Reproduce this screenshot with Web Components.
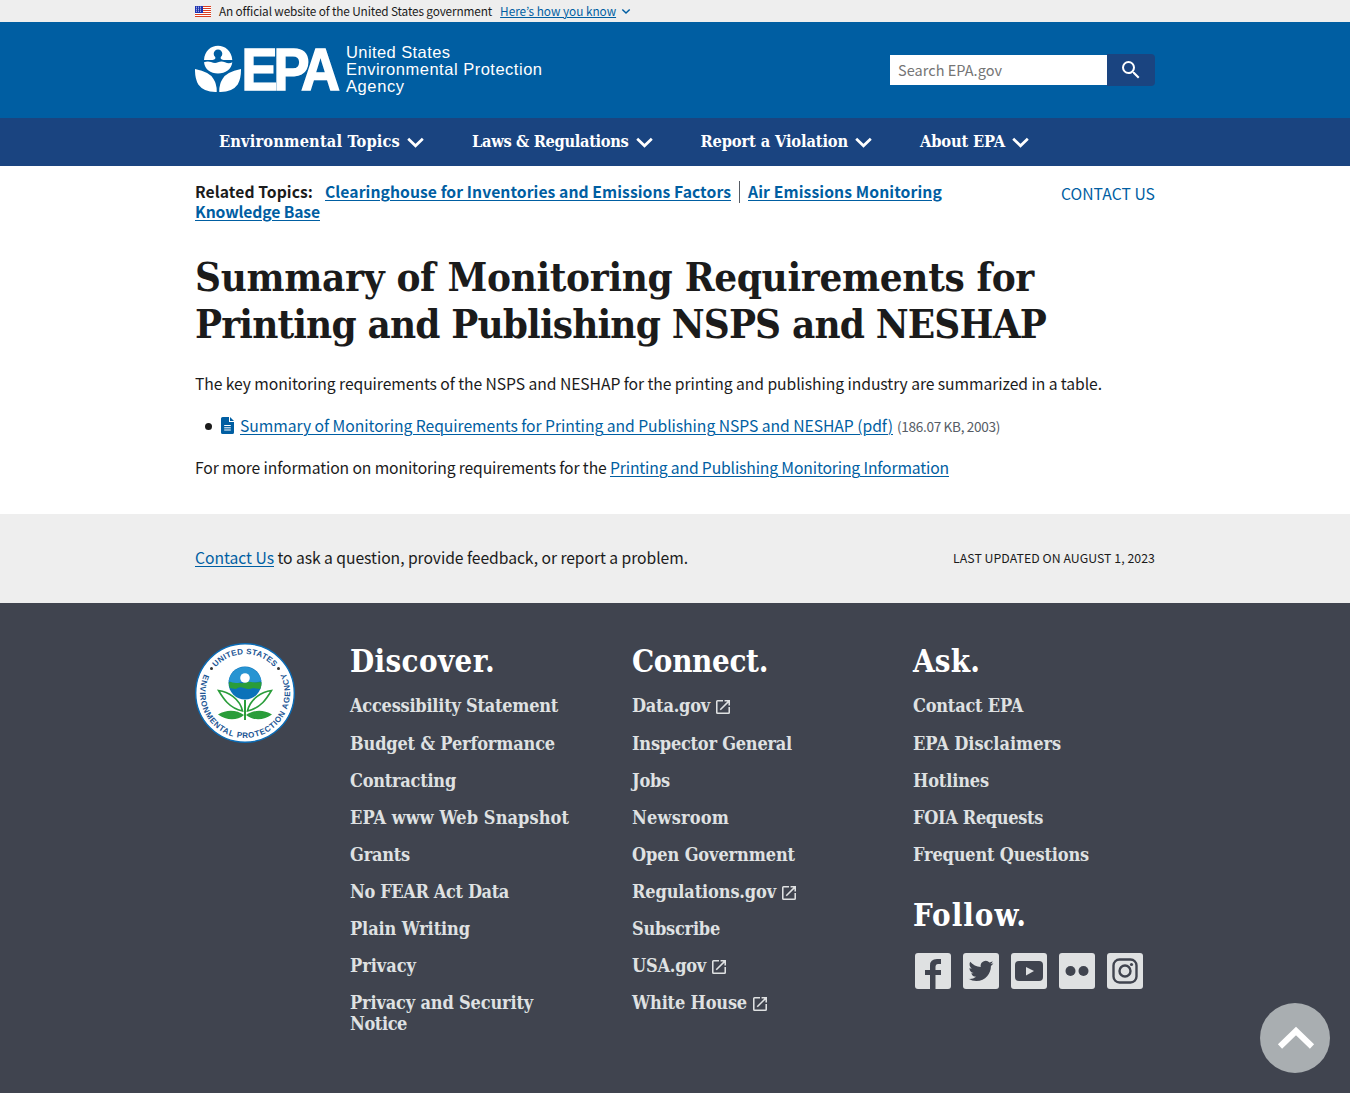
<!DOCTYPE html>
<html lang="en">
<head>
<meta charset="utf-8">
<title>Summary of Monitoring Requirements for Printing and Publishing NSPS and NESHAP | US EPA</title>
<style>
html{overflow:hidden}
body{margin:0;background:#fff;color:#1b1b1b;
--sans:"Noto Sans CJK KR","Open Sans",sans-serif;
--serif:"DejaVu Serif Condensed","DejaVu Serif",serif;
--link:#005ea2;--dark:#40444f;font-family:var(--sans);font-size:15.7px;line-height:26px}
</style>
</head>
<body>
<epa-page></epa-page>
<script>
const css = `*{box-sizing:border-box}a{color:var(--link);text-decoration-thickness:1px;text-underline-offset:2px}.wrap{width:960px;margin:0 auto}svg{display:block;flex:none}`;
function define(name, style, html){
  customElements.define(name, class extends HTMLElement{
    constructor(){
      super();
      this.attachShadow({mode:'open'}).innerHTML = '<style>' + css + style + '</style>' + (typeof html === 'function' ? html(this) : html);
    }
  });
}
const f = (text, w) => `<fit-text w="${w}">${text}</fit-text>`;

define('gov-banner', `:host{display:block;height:22px;background:#eee;font-size:11.8px;line-height:22px}
.wrap{display:flex;align-items:center;height:22px}.t{margin:0 8px}.c{margin-left:5px}a{text-underline-offset:1px}`,
`<div class="wrap"><svg width="16" height="11" viewBox="0 0 16 11"><path fill="#fff" d="M0 0h16v11H0z"/><path stroke="#db3e1f" d="M0 .5h16M0 2.5h16M0 4.5h16M0 6.5h16M0 8.5h16M0 10.5h16"/><path fill="#1e33b1" d="M0 0h8v7H0z"/><path stroke="#fff" stroke-width=".8" stroke-dasharray="1 1" d="M1 1.2h6M1 3.2h6M1 5.2h6"/></svg>
<span class="t">${f('An official website of the United States government',273)}</span><a href="#">${f('Here’s how you know',116)}</a>
<svg class="c" width="10" height="7" viewBox="0 0 10 7"><path fill="none" stroke="#005ea2" stroke-width="1.5" d="m1.3 1.5 3.7 3.5 3.7-3.5"/></svg></div>`);

define('epa-logo', `:host{display:block}text{font-family:"Liberation Sans",sans-serif;fill:#fff}`,
`<svg width="350" height="80" viewBox="0 -10 350 80">
<path fill="#fff" d="M9 19C9.500 10 16 4.800 23 4.800S36.700 10 37.300 19H28.500Q24.500 18 26 15.800A4.300 4.300 0 1 0 20 15.800Q21.600 18 17.500 19Z"/>
<path fill="#fff" d="M9 21.300Q12.500 19.700 16 21Q20 23 23 21.300Q26.500 19.700 30 21.300Q34 23 37.300 21.300C36.500 28.500 30.500 32.600 23 32.600S9.800 28.500 9 21.300Z"/>
<path fill="#fff" d="M0 28Q15 31 18.500 38Q22 43.500 21.700 51Q9 51.400 3.300 43.500Q-.2 37.500 0 28ZM46 28Q31 31 27.500 38Q24 43.500 24.300 51Q37 51.400 42.700 43.500Q46.200 37.500 46 28Z"/>
<text transform="translate(46.500 49) scale(.9 1)" x="0 35.500 66" font-size="60" font-weight="700" stroke="#fff" stroke-width="1.600">EPA</text>
<g font-size="16.500"><text x="151" y="17" textLength="104">United States</text><text x="151" y="33.500" textLength="196">Environmental Protection</text><text x="151" y="50.500" textLength="58">Agency</text></g></svg>`);

define('site-search', `:host{display:flex;width:265px;height:30px;margin-top:33px}
.i{width:217px;background:#fff;color:#757575;padding-left:8px;line-height:30px;font-size:14.5px}
button{width:48px;height:32px;margin-top:-1px;border:0;border-radius:0 4px 4px 0;background:#1a4480;padding:0;display:flex;align-items:center;justify-content:center}`,
`<div class="i">${f('Search EPA.gov',104)}</div><button aria-label="Search"><svg width="24" height="24" viewBox="0 0 24 24" fill="#fff"><path d="M15.500 14h-.79l-.28-.27A6.471 6.471 0 0 0 16 9.500 6.500 6.500 0 1 0 9.500 16c1.610 0 3.090-.59 4.230-1.570l.27.28v.79l5 4.990L20.490 19l-4.990-5zm-6 0C7.010 14 5 11.990 5 9.500S7.010 5 9.500 5 14 7.010 14 9.500 11.990 14 9.500 14z"/></svg></button>`);

define('site-header', `:host{display:block;background:#005ea2;height:96px}.wrap{display:flex;justify-content:space-between;padding-top:9px}site-search{margin-top:24px}`,
`<div class="wrap"><epa-logo></epa-logo><site-search></site-search></div>`);

define('nav-item', `:host{display:flex;align-items:center;gap:7px}`,
`<slot></slot><svg width="17" height="11" viewBox="0 0 17 11"><path fill="none" stroke="#fff" stroke-width="2.700" d="m1.200 1.800 7.300 7 7.300-7"/></svg>`);
define('site-nav', `:host{display:block;background:#1a4480;height:48px;color:#fff;font:bold 16.300px/46px var(--serif)}
.wrap{display:flex;padding-left:24px;height:48px;gap:48px}nav-item{height:48px}`,
`<div class="wrap"><nav-item>${f('Environmental Topics',181)}</nav-item><nav-item>${f('Laws &amp; Regulations',156.5)}</nav-item><nav-item>${f('Report a Violation',147.5)}</nav-item><nav-item>${f('About EPA',85)}</nav-item></div>`);

define('related-topics', `:host{display:flex;justify-content:space-between;height:70px;padding-top:15px}
.r{font-weight:700;line-height:20px;margin-top:1px}.l{display:flex;height:20px;align-items:center}.l i{width:1px;height:22px;background:#565c65;margin:0 8px}.l span{margin-right:12px}.c{line-height:26px}.c a{text-decoration:none}`,
`<div class="r"><div class="l"><span>${f('Related Topics:',118)}</span><a href="#">${f('Clearinghouse for Inventories and Emissions Factors',406)}</a><i></i><a href="#">${f('Air Emissions Monitoring',194)}</a></div><div class="l"><a href="#">${f('Knowledge Base',125)}</a></div></div><div class="c"><a href="#">${f('CONTACT US',94)}</a></div>`);

define('page-content', `:host{display:block;height:348px}h1{margin:17px 0 0;font:bold 40px/47px var(--serif)}
p{margin:0;line-height:26px}.a{margin-top:24px}.b{margin-top:16px}
ul{list-style:none;margin:16px 0 0;padding:0 0 0 10px}li{display:flex;align-items:center;height:26px}.dot{width:7px;height:7px;border-radius:50%;background:#1b1b1b;margin:0 9px 0 0}.s{font-size:13.600px;color:#565c65;margin:0 0 0 4px}.d{margin:0 6px 2px 0}`,
`<div class="wrap"><related-topics></related-topics><h1>${f('Summary of Monitoring Requirements for',839)}<br>${f('Printing and Publishing NSPS and NESHAP',851)}</h1>
<p class="a">${f('The key monitoring requirements of the NSPS and NESHAP for the printing and publishing industry are summarized in a table.',907)}</p>
<ul><li><span class="dot"></span><svg class="d" width="13" height="17" viewBox="0 0 13 17"><path fill="#005ea2" d="M1.600 0H8v5h5v10.400q0 1.600-1.600 1.600H1.600Q0 17 0 15.400V1.600Q0 0 1.600 0ZM9 0l4 4H9Z"/><path stroke="#fff" d="M3.200 8.500h6.600M3.200 10.800h6.600M3.200 13h6.600"/></svg><a href="#">${f('Summary of Monitoring Requirements for Printing and Publishing NSPS and NESHAP (pdf)',653)}</a><span class="s">${f('(186.07 KB, 2003)',103)}</span></li></ul>
<p class="b">${f('For more information on monitoring requirements for the&nbsp;',415)}<a href="#">${f('Printing and Publishing Monitoring Information',339)}</a></p></div>`);

define('contact-strip', `:host{display:block;background:#eee;height:89px}.wrap{display:flex;justify-content:space-between;align-items:center;height:87px}.u{font-size:12.300px;padding-top:1px}`,
`<div class="wrap"><div><a href="#">${f('Contact Us',79)}</a>${f('&nbsp;to ask a question, provide feedback, or report a problem.',414)}</div><div class="u">${f('LAST UPDATED ON AUGUST 1, 2023',202)}</div></div>`);

define('epa-seal', `:host{display:block;width:100px;height:100px}text{font-family:"Liberation Sans",sans-serif;font-weight:700;fill:#205493;font-size:8px}`,
`<svg width="100" height="100" viewBox="0 0 100 100"><circle cx="50" cy="50" r="49.300" fill="#fff" stroke="#0b6cb6" stroke-width="1.400"/>
<defs><path id="t" d="M11 50A39 39 0 0 1 89 50"/><path id="b" d="M10.500 28.500A45 45 0 1 0 89.500 28.500"/></defs>
<text><textPath href="#t" startOffset="28" textLength="66">UNITED STATES</textPath></text>
<text><textPath href="#b" startOffset="3" textLength="181">ENVIRONMENTAL PROTECTION AGENCY</textPath></text>
<circle cx="16.500" cy="25.500" r="1.500" fill="#333"/><circle cx="83.500" cy="25.500" r="1.500" fill="#333"/>
<circle cx="50" cy="40" r="16.500" fill="#0b72b9"/><path fill="#2a9d3a" d="M33.700 39.500Q38 38 43 39.500T52 39T60 39.500L66.300 39Q67 42 65.300 46L58 45Q54 47 49 45T41 46L34.700 45Z"/><path fill="#2794d2" d="M33.700 38A16.500 16.500 0 0 1 66.300 38Q61 40 56 39T45 39.500T33.700 38Z"/><circle cx="50" cy="35" r="4.800" fill="#fff"/>
<g stroke="#2a9d3a" fill="none"><path stroke-width="2" d="M50 57v20"/><path fill="#fff" stroke-width="1.600" d="M47.500 68C45 56 33 48.500 23.500 47.500C28 55 34 65 47.500 68ZM52.500 68C55 56 67 48.500 76.500 47.500C72 55 66 65 52.500 68Z"/></g>
<path fill="#2a9d3a" d="M23 71.500C32 66 42 67 49 72C42 78 31 77.500 23 71.500ZM77 71.500C68 66 58 67 51 72C58 78 69 77.500 77 71.500Z"/></svg>`);

define('footer-title', `:host{display:block;color:#fff;font:bold 31px/37px var(--serif);height:37px}`, `<slot></slot>`);
define('footer-link', `:host{display:block;color:#dfe1e2;font:bold 18px/21px var(--serif);padding:8px 0}:host(:first-child){padding-bottom:9px}.row{display:flex;align-items:center}svg{margin:3px 0 0 6px}`,
 h => `<div class="row"><div><slot></slot></div>${h.hasAttribute('ext') ? `<svg width="14" height="14" viewBox="3 3 18 18" fill="#dfe1e2"><path d="M19 19H5V5h7V3H5a2 2 0 0 0-2 2v14a2 2 0 0 0 2 2h14a2 2 0 0 0 2-2v-7h-2v7zM14 3v2h3.590l-9.830 9.830 1.410 1.410L19 6.410V10h2V3h-7z"/></svg>` : ''}</div>`);
define('social-icon', `:host{display:block;width:36px;height:36px}svg{border-radius:3px}.k{fill:var(--dark)}`, h => {
  const d = {
    facebook:`<path class="k" d="M15 36V22h-5v-5h5v-4.500Q15 6 22 6h4v5h-3.200Q20.500 11 20.500 13.500V17H26v5h-5.500v14Z"/>`,
    twitter:`<path class="k" transform="translate(5.500 5.500) scale(1.040)" d="M23.950 4.570a10 10 0 0 1-2.820.77 4.960 4.960 0 0 0 2.160-2.720c-.95.560-2 .96-3.130 1.190a4.920 4.920 0 0 0-8.380 4.480C7.690 8.100 4.070 6.130 1.640 3.160a4.920 4.920 0 0 0 1.520 6.570 4.900 4.900 0 0 1-2.230-.61v.06a4.920 4.920 0 0 0 3.950 4.830 5 5 0 0 1-2.210.08 4.940 4.940 0 0 0 4.600 3.420A9.870 9.870 0 0 1 0 19.540a14 14 0 0 0 7.550 2.210c9.050 0 14-7.500 14-13.980l-.02-.64a9.900 9.900 0 0 0 2.420-2.560Z"/>`,
    youtube:`<rect x="4" y="8" width="28" height="20" rx="4" class="k"/><path fill="#dfe1e2" d="m15 14 8 4-8 4.500z"/>`,
    flickr:`<circle cx="11.500" cy="18" r="5" class="k"/><circle cx="24.500" cy="18" r="5" class="k"/>`,
    instagram:`<g fill="none" stroke="#40444f" stroke-width="2.400"><rect x="6.500" y="6.500" width="23" height="23" rx="6"/><circle cx="18" cy="18" r="5.500"/></g><circle cx="24.500" cy="11.500" r="1.600" class="k"/>`};
  return `<svg width="36" height="36" viewBox="0 0 36 36"><path fill="#dfe1e2" d="M0 0h36v36H0z"/>${d[h.getAttribute('kind')]}</svg>`;
});
const item = ([t, w, ext]) => `<footer-link${ext ? ' ext' : ''}>${f(t, w)}</footer-link>`;
define('site-footer', `:host{display:block;background:var(--dark);height:490px}.wrap{display:flex;padding-top:40px}.col{width:281px}.first{width:282px}.seal{width:155px}.links{margin-top:7px}.second{margin-top:24px}.social{display:flex;gap:12px;margin:19px 0 0 2px}`,
`<div class="wrap"><div class="seal"><epa-seal></epa-seal></div>
<div class="col first"><footer-title>${f('Discover.',145)}</footer-title><div class="links">${[['Accessibility Statement',208],['Budget &amp; Performance',205],['Contracting',106],['EPA www Web Snapshot',219],['Grants',60],['No FEAR Act Data',159],['Plain Writing',120],['Privacy',66]].map(item).join('')}<footer-link>${f('Privacy and Security',183)}<br>${f('Notice',57)}</footer-link></div></div>
<div class="col"><footer-title>${f('Connect.',136)}</footer-title><div class="links">${[['Data.gov',78,1],['Inspector General',160],['Jobs',38],['Newsroom',97],['Open Government',163],['Regulations.gov',144,1],['Subscribe',88],['USA.gov',74,1],['White House',115,1]].map(item).join('')}</div></div>
<div><footer-title>${f('Ask.',67)}</footer-title><div class="links">${[['Contact EPA',110],['EPA Disclaimers',148],['Hotlines',76],['FOIA Requests',130],['Frequent Questions',176]].map(item).join('')}</div><footer-title class="second">${f('Follow.',114)}</footer-title><div class="social">${['facebook','twitter','youtube','flickr','instagram'].map(k => `<social-icon kind="${k}"></social-icon>`).join('')}</div></div></div>`);

define('back-to-top', `:host{display:block;position:fixed;right:20px;bottom:20px;width:70px;height:70px;border-radius:50%;background:#a9aeb1}`,
`<svg width="70" height="70" viewBox="0 0 70 70"><path fill="none" stroke="#fff" stroke-width="6" d="m20 43.500 16-15.500 16 15.500"/></svg>`);

define('epa-page', `:host{display:block}`, `<gov-banner></gov-banner><site-header></site-header><site-nav></site-nav><page-content></page-content><contact-strip></contact-strip><site-footer></site-footer><back-to-top></back-to-top>`);

/* Tracks a run of text so that it spans the width given in "w". */
customElements.define('fit-text', class extends HTMLElement{
  constructor(){
    super();
    this.attachShadow({mode:'open'}).innerHTML = '<style>:host{display:inline;white-space:nowrap}</style><slot></slot>';
  }
  connectedCallback(){
    this.style.letterSpacing = '0';
    const natural = this.getBoundingClientRect().width;
    this.style.letterSpacing = (this.getAttribute('w') - natural) / this.textContent.length + 'px';
  }
});
</script>
</body>
</html>
